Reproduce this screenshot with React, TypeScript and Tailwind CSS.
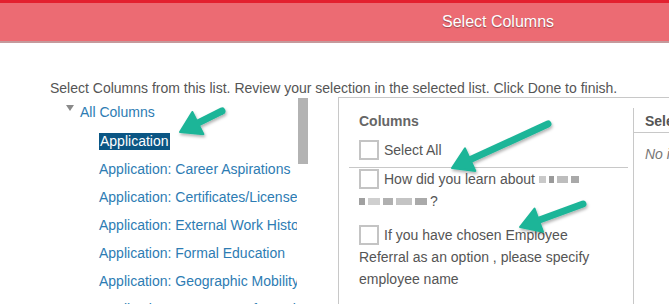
import React from "react";

const items = [
  "Application: Career Aspirations",
  "Application: Certificates/Licenses",
  "Application: External Work History",
  "Application: Formal Education",
  "Application: Geographic Mobility",
  "Application: Language Information",
];

function Arrow({ x1, y1, x2, y2 }: { x1: number; y1: number; x2: number; y2: number }) {
  const a = Math.atan2(y2 - y1, x2 - x1);
  const len = 20;
  const w = 0.62;
  const bx = x2 - Math.cos(a) * len;
  const by = y2 - Math.sin(a) * len;
  const p1 = `${bx + Math.cos(a + Math.PI / 2) * len * w},${by + Math.sin(a + Math.PI / 2) * len * w}`;
  const p2 = `${bx - Math.cos(a + Math.PI / 2) * len * w},${by - Math.sin(a + Math.PI / 2) * len * w}`;
  return (
    <g filter="url(#shadow)">
      <line x1={x1} y1={y1} x2={bx + Math.cos(a) * 3} y2={by + Math.sin(a) * 3} stroke="#1fb598" strokeWidth={7} strokeLinecap="round" />
      <polygon points={`${x2},${y2} ${p1} ${p2}`} fill="#1fb598" strokeLinejoin="round" stroke="#1fb598" strokeWidth={2} />
    </g>
  );
}

function Blur({ w, shade }: { w: number; shade: string }) {
  return <span className={`inline-block h-[7px] align-middle mr-[3px] ${shade}`} style={{ width: w }} />;
}

function Checkbox() {
  return <span className="inline-block w-[20px] h-[20px] border-2 border-[#c4c4c4] bg-white shrink-0" />;
}

export default function App() {
  return (
    <div className="relative w-[669px] h-[304px] overflow-hidden bg-white font-['Liberation_Sans',Arial,sans-serif]">
      <div className="h-[3px] bg-[#e3202f]" />
      <div className="h-[40px] bg-[#ec6b73] border-b-2 border-[#c49a9c] flex items-center pl-[442px]">
        <span className="text-white text-[16px] leading-[20px] [text-shadow:0_1px_1px_rgba(0,0,0,0.35)]">Select Columns</span>
      </div>

      <div className="pl-[50px] pt-[35px] text-[14px] leading-[20px] text-[#555]">
        Select Columns from this list. Review your selection in the selected list. Click Done to finish.
      </div>

      <div className="flex pt-[3px]">
        <div className="relative w-[260px] ml-[66px] shrink-0">
          <div className="flex items-center h-[22px]">
            <span className="w-0 h-0 border-l-[4px] border-r-[4px] border-t-[6px] border-l-transparent border-r-transparent border-t-[#8a8a8a] mr-[6px] -mt-[9px]" />
            <span className="text-[#2d7cb3] text-[14px] leading-[20px]">All Columns</span>
          </div>
          <div className="pl-[33px] mt-[4px] w-[231px] overflow-hidden">
            <div className="h-[28px] flex items-center">
              <span className="bg-[#0b5684] text-white text-[14px] px-[1px] leading-[17px]">Application</span>
            </div>
            {items.map((t) => (
              <div key={t} className="h-[28px] flex items-center whitespace-nowrap text-[14px] leading-[20px] text-[#2d7cb3]">
                {t}
              </div>
            ))}
          </div>
          <div className="absolute left-[232px] top-[-3px] w-[10px] h-[66px] bg-[#b3b3b3]" />
        </div>

        <div className="ml-[12px] mt-[-4px] flex-1 border border-[#c8c8c8] h-[300px] flex">
          <div className="w-[294px] pl-[10px] pr-[5px] shrink-0">
            <div className="pl-[10px] pt-[13px] text-[14px] leading-[20px] font-bold text-[#666]">Columns</div>
            <div className="flex items-center gap-[5px] pl-[10px] mt-[8px] h-[22px]">
              <Checkbox />
              <span className="text-[14px] leading-[20px] text-[#555]">Select All</span>
            </div>
            <div className="border-b border-[#c8c8c8] mt-[6px]" />
            <div className="pl-[10px]">
              <div className="flex items-center gap-[5px] h-[22px]">
                <Checkbox />
                <span className="text-[14px] leading-[20px] text-[#555] flex items-center whitespace-nowrap">
                  How did you learn about&nbsp;
                  <Blur w={7} shade="bg-[#c9c9c9]" />
                  <Blur w={5} shade="bg-[#9a9a9a]" />
                  <Blur w={11} shade="bg-[#bdbdbd]" />
                  <Blur w={8} shade="bg-[#a9a9a9]" />
                </span>
              </div>
              <div className="flex items-center h-[22px] text-[14px] leading-[20px] text-[#555]">
                <Blur w={6} shade="bg-[#a0a0a0]" />
                <Blur w={12} shade="bg-[#cfcfcf]" />
                <Blur w={10} shade="bg-[#b0b0b0]" />
                <Blur w={16} shade="bg-[#c4c4c4]" />
                <Blur w={12} shade="bg-[#aaaaaa]" />
                <span>?</span>
              </div>
              <div className="flex items-center gap-[5px] h-[22px] mt-[12px]">
                <Checkbox />
                <span className="text-[14px] leading-[20px] text-[#555]">If you have chosen Employee</span>
              </div>
              <div className="text-[14px] text-[#555] leading-[22px]">
                Referral as an option , please specify
                <br />
                employee name
              </div>
            </div>
          </div>
          <div className="flex-1 border-l border-[#c8c8c8] mt-[10px]">
            <div className="pl-[11px] pt-[3px] h-[25px] text-[14px] leading-[20px] font-bold text-[#555] border-b border-[#c8c8c8] whitespace-nowrap">
              Selected Columns
            </div>
            <div className="pl-[11px] pt-[11px] text-[14px] leading-[20px] italic text-[#777] whitespace-nowrap">No items selected</div>
          </div>
        </div>
      </div>

      <svg className="absolute inset-0 pointer-events-none" width={669} height={304}>
        <defs>
          <filter id="shadow" x="-20%" y="-50%" width="140%" height="200%">
            <feDropShadow dx="1" dy="2" stdDeviation="1.5" floodColor="#000" floodOpacity="0.3" />
          </filter>
        </defs>
        <Arrow x1={222} y1={111} x2={180} y2={132} />
        <Arrow x1={548} y1={124} x2={452} y2={168} />
        <Arrow x1={583} y1={204} x2={520} y2={227} />
      </svg>
    </div>
  );
}
